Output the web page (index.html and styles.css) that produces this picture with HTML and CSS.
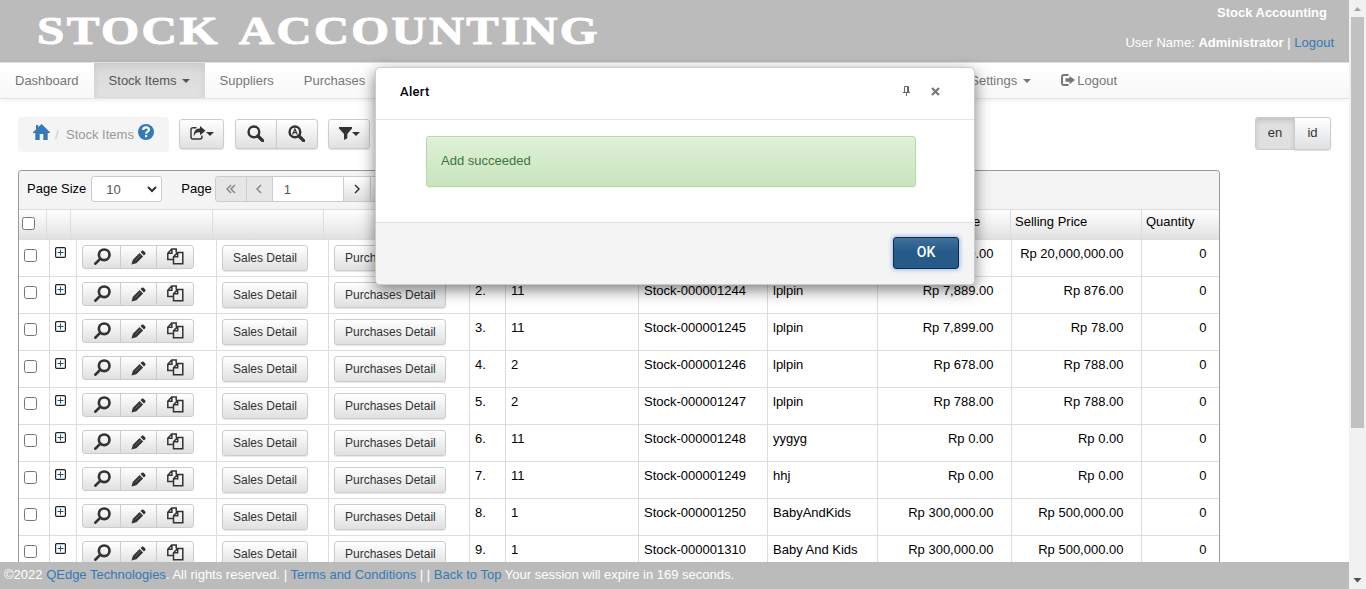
FILE: index.html
```html
<!DOCTYPE html>
<html lang="en">
<head>
<meta charset="utf-8">
<title>Stock Accounting</title>
<link rel="stylesheet" href="styles.css">
</head>
<body>
<svg class="defs" aria-hidden="true">
  <symbol id="zoom" viewBox="0 0 16 16"><circle cx="9.6" cy="6.4" r="5" fill="none" stroke="currentColor" stroke-width="2.5"/><path d="M6 10 1.300 14.700" stroke="currentColor" stroke-width="2.600" stroke-linecap="round"/></symbol>
  <symbol id="find" viewBox="0 0 16 16"><circle cx="6.500" cy="6.500" r="5" fill="none" stroke="currentColor" stroke-width="2.300"/><path d="M10.300 10.300 14.700 14.700" stroke="currentColor" stroke-width="3.200" stroke-linecap="round"/></symbol>
  <symbol id="pencil" viewBox="0 0 16 16"><path d="M.5 15.500 2 10.300 9.200 3.100 12.900 6.800 5.700 14ZM10.100 2.200 11.600.8Q12.500.1 13.400.8L15.200 2.600Q15.900 3.500 15.200 4.400L13.800 5.900Z" fill="currentColor"/><path d="m4.500 11.300 6-6" stroke="#888" stroke-width=".7"/></symbol>
  <symbol id="copy" viewBox="0 0 17 17"><path d="M5.700 11.500H.8V5.200L4.700 1H9.200V4.500M4.900 1.200V5.200H1M6.500 15.800V8.700L10.500 4.600H15.800V15.800ZM10.700 4.800V8.800H6.700" fill="none" stroke="currentColor" stroke-width="1.500"/></symbol>
  <symbol id="plus" viewBox="0 0 11 11"><rect x=".6" y=".6" width="9.800" height="9.800" rx="1.200" fill="none" stroke="#222" stroke-width="1.200"/><path d="M2.500 5.500h6M5.500 2.500v6" stroke="#157" stroke-width="1"/></symbol>
</svg>
<div class="screen">
  <div class="page">
    <header class="top">
      <svg class="logo" width="570" height="44" role="img"><text x="1" y="30" textLength="183" lengthAdjust="spacingAndGlyphs">STOCK</text><text x="203" y="30" textLength="361" lengthAdjust="spacingAndGlyphs">ACCOUNTING</text></svg>
      <div class="user"><div class="site">Stock Accounting</div><div>User Name: <b>Administrator</b> | <a>Logout</a></div></div>
    </header>
    <nav class="nav">
      <a class="item">Dashboard</a><a class="item active">Stock Items <i class="caret"></i></a><a class="item">Suppliers</a><a class="item">Purchases</a>
      <a class="item settings">Settings <i class="caret"></i></a>
      <a class="item out"><svg width="14" height="13" viewBox="0 0 14 13"><path d="M7.500 1H2.800Q1 1 1 2.800V9.200Q1 11 2.800 11H7.500" fill="none" stroke="currentColor" stroke-width="1.900"/><path d="M4.500 4.300H8.500V1.900L14 6 8.500 10.200V7.800H4.500Z" fill="currentColor"/></svg>Logout</a>
    </nav>
    <div class="tools">
      <div class="crumb"><svg width="17" height="16" viewBox="0 0 17 16"><path d="M8.500 0 17 8.300V9H14.700V16H10.300V10H6.700V16H2.300V9H0V8.300L3 5.400V1H5.200V3.200Z" fill="#337ab7"/></svg><span class="slash">/</span><span>Stock Items</span><svg width="16" height="16" viewBox="0 0 16 16"><circle cx="8" cy="8" r="8" fill="#337ab7"/><path d="M5.200 6C5.200 2.500 10.900 2.600 10.900 5.800 10.900 7.800 8.100 7.600 8.100 9.800" fill="none" stroke="#fff" stroke-width="2.200"/><path d="M7 11h2.200v2.200H7z" fill="#fff"/></svg></div>
      <button class="btn export"><svg width="16" height="15" viewBox="0 0 16 15"><path d="M6.500 1.800H3Q1 1.800 1 3.800V11Q1 13 3 13H10Q12 13 12 11V9.500" fill="none" stroke="currentColor" stroke-width="1.400"/><path d="M3.800 10.500C3.500 5 6 2.600 10 2.600V0L15.500 4.700 10 9.300V6.400C7 6.200 5 7 3.800 10.500Z" fill="currentColor"/></svg><i class="caret"></i></button>
      <div class="group"><button class="btn"><svg width="17" height="17"><use href="#find"/></svg></button><button class="btn"><svg width="17" height="17" viewBox="0 0 16 16"><use href="#find"/><path d="M4.300 9 6.500 3.700 8.700 9M5.200 7.200H7.900" fill="none" stroke="currentColor" stroke-width="1.100"/></svg></button></div>
      <button class="btn filter"><svg width="13" height="13" viewBox="0 0 13 13"><path d="M0 0H13V1.500L8.300 7V11.300L5 13V7L0 1.500Z" fill="currentColor"/></svg><i class="caret"></i></button>
      <div class="group lang"><button class="btn on">en</button><button class="btn">id</button></div>
    </div>
    <section class="grid">
      <div class="pager"><span>Page Size</span><div class="select">10<svg width="10" height="7" viewBox="0 0 10 7"><path d="m1 1 4 4 4-4" fill="none" stroke="#333" stroke-width="2"/></svg></div><span class="pagelabel">Page</span>
        <div class="pages"><span class="pg dis"><svg width="10" height="10" viewBox="0 0 10 10"><path d="M5 1 1 5l4 4M9 1 5 5l4 4"/></svg></span><span class="pg dis narrow"><svg width="6" height="10" viewBox="0 0 6 10"><path d="M5 1 1 5l4 4"/></svg></span><span class="num">1</span><span class="pg next"><svg width="6" height="10" viewBox="0 0 6 10"><path d="m1 1 4 4-4 4"/></svg></span><span class="pg"><svg width="10" height="10" viewBox="0 0 10 10"><path d="m1 1 4 4-4 4M5 1l4 4-4 4"/></svg></span></div>
      </div>
      <div class="head"><span><i class="check"></i></span><span></span><span></span><span></span><span></span><span></span><span></span><span></span><span></span><span class="price">Purchasing Price</span><span>Selling Price</span><span>Quantity</span></div>
      <div class="row"><span><i class="check"></i></span><span><svg class="plus"><use href="#plus"/></svg></span><span><div class="acts"><b><svg><use href="#zoom"/></svg></b><b><svg><use href="#pencil"/></svg></b><b><svg><use href="#copy"/></svg></b></div></span><span><button class="detail">Sales Detail</button></span><span><button class="detail">Purchases Detail</button></span><span>1.</span><span>11</span><span>Stock-000001243</span><span>lplpin</span><span>Rp 10,000,000.00</span><span>Rp 20,000,000.00</span><span>0</span></div>
      <div class="row"><span><i class="check"></i></span><span><svg class="plus"><use href="#plus"/></svg></span><span><div class="acts"><b><svg><use href="#zoom"/></svg></b><b><svg><use href="#pencil"/></svg></b><b><svg><use href="#copy"/></svg></b></div></span><span><button class="detail">Sales Detail</button></span><span><button class="detail">Purchases Detail</button></span><span>2.</span><span>11</span><span>Stock-000001244</span><span>lplpin</span><span>Rp 7,889.00</span><span>Rp 876.00</span><span>0</span></div>
      <div class="row"><span><i class="check"></i></span><span><svg class="plus"><use href="#plus"/></svg></span><span><div class="acts"><b><svg><use href="#zoom"/></svg></b><b><svg><use href="#pencil"/></svg></b><b><svg><use href="#copy"/></svg></b></div></span><span><button class="detail">Sales Detail</button></span><span><button class="detail">Purchases Detail</button></span><span>3.</span><span>11</span><span>Stock-000001245</span><span>lplpin</span><span>Rp 7,899.00</span><span>Rp 78.00</span><span>0</span></div>
      <div class="row"><span><i class="check"></i></span><span><svg class="plus"><use href="#plus"/></svg></span><span><div class="acts"><b><svg><use href="#zoom"/></svg></b><b><svg><use href="#pencil"/></svg></b><b><svg><use href="#copy"/></svg></b></div></span><span><button class="detail">Sales Detail</button></span><span><button class="detail">Purchases Detail</button></span><span>4.</span><span>2</span><span>Stock-000001246</span><span>lplpin</span><span>Rp 678.00</span><span>Rp 788.00</span><span>0</span></div>
      <div class="row"><span><i class="check"></i></span><span><svg class="plus"><use href="#plus"/></svg></span><span><div class="acts"><b><svg><use href="#zoom"/></svg></b><b><svg><use href="#pencil"/></svg></b><b><svg><use href="#copy"/></svg></b></div></span><span><button class="detail">Sales Detail</button></span><span><button class="detail">Purchases Detail</button></span><span>5.</span><span>2</span><span>Stock-000001247</span><span>lplpin</span><span>Rp 788.00</span><span>Rp 788.00</span><span>0</span></div>
      <div class="row"><span><i class="check"></i></span><span><svg class="plus"><use href="#plus"/></svg></span><span><div class="acts"><b><svg><use href="#zoom"/></svg></b><b><svg><use href="#pencil"/></svg></b><b><svg><use href="#copy"/></svg></b></div></span><span><button class="detail">Sales Detail</button></span><span><button class="detail">Purchases Detail</button></span><span>6.</span><span>11</span><span>Stock-000001248</span><span>yygyg</span><span>Rp 0.00</span><span>Rp 0.00</span><span>0</span></div>
      <div class="row"><span><i class="check"></i></span><span><svg class="plus"><use href="#plus"/></svg></span><span><div class="acts"><b><svg><use href="#zoom"/></svg></b><b><svg><use href="#pencil"/></svg></b><b><svg><use href="#copy"/></svg></b></div></span><span><button class="detail">Sales Detail</button></span><span><button class="detail">Purchases Detail</button></span><span>7.</span><span>11</span><span>Stock-000001249</span><span>hhj</span><span>Rp 0.00</span><span>Rp 0.00</span><span>0</span></div>
      <div class="row"><span><i class="check"></i></span><span><svg class="plus"><use href="#plus"/></svg></span><span><div class="acts"><b><svg><use href="#zoom"/></svg></b><b><svg><use href="#pencil"/></svg></b><b><svg><use href="#copy"/></svg></b></div></span><span><button class="detail">Sales Detail</button></span><span><button class="detail">Purchases Detail</button></span><span>8.</span><span>1</span><span>Stock-000001250</span><span>BabyAndKids</span><span>Rp 300,000.00</span><span>Rp 500,000.00</span><span>0</span></div>
      <div class="row"><span><i class="check"></i></span><span><svg class="plus"><use href="#plus"/></svg></span><span><div class="acts"><b><svg><use href="#zoom"/></svg></b><b><svg><use href="#pencil"/></svg></b><b><svg><use href="#copy"/></svg></b></div></span><span><button class="detail">Sales Detail</button></span><span><button class="detail">Purchases Detail</button></span><span>9.</span><span>1</span><span>Stock-000001310</span><span>Baby And Kids</span><span>Rp 300,000.00</span><span>Rp 500,000.00</span><span>0</span></div>
    </section>
    <footer class="foot">©2022 <a>QEdge Technologies</a>. All rights reserved. | <a>Terms and Conditions</a> | | <a>Back to Top</a> Your session will expire in 169 seconds.</footer>
  </div>
  <div class="scroll"><svg width="17" height="17" viewBox="0 0 17 17"><path d="m5 11 3.500-4 3.500 4Z" fill="#a3a3a3"/></svg><div class="thumb"></div><svg class="down" width="17" height="17" viewBox="0 0 17 17"><path d="m4.500 6 4 4.500 4-4.500Z" fill="#505050"/></svg></div>
  <div class="dialog">
    <div class="dhead"><span class="dtitle">Alert</span><svg class="pin" width="7" height="10" viewBox="0 0 7 10"><path d="M1.500.5h4V6M1.500.5V6M0 6.500h7M3.500 7v3M4.500 1v5" fill="none" stroke="#666"/></svg><svg width="9" height="9" viewBox="0 0 9 9"><path d="m1 1 7 7M8 1 1 8" stroke="#777" stroke-width="2.200"/></svg></div>
    <div class="dbody"><div class="alert">Add succeeded</div></div>
    <div class="dfoot"><button class="ok">OK</button></div>
  </div>
</div>
</body>
</html>
```
FILE: styles.css
```css
* { box-sizing: border-box; }
body { margin: 0; font: 13px/18px "Liberation Sans", Arial, sans-serif; color: #000; background: #fff; overflow: hidden; }
a { color: #337ab7; }
button { font: inherit; margin: 0; padding: 0; color: #333; }
.defs { display: block; width: 0; height: 0; }
.screen { display: flex; position: relative; width: 1366px; height: 589px; overflow: hidden; }
.page { display: flex; flex-direction: column; width: 1349px; height: 589px; }
.top { display: flex; flex: none; justify-content: space-between; height: 62px; background: #bbb; color: #fff; padding: 3px 15px 0 36px; }
.logo { margin-top: 11px; overflow: visible; }
.logo text { font: bold 41px "Liberation Serif", serif; letter-spacing: 2px; fill: #fff; stroke: #fff; stroke-width: 1; }
.user { text-align: right; }
.user div { height: 30px; }
.user .site { font-weight: bold; padding-right: 7px; padding-top: 1px; }
.user div + div { padding-top: 1px; }
.nav { display: flex; flex: none; height: 37px; border-top: 1px solid #e0e0e0; border-bottom: 1px solid #e3e3e3; background: linear-gradient(#fff, #f8f8f8); box-shadow: 0 1px 5px rgba(0,0,0,.075); }
.item { display: flex; align-items: center; gap: 6px; padding: 0 15px; color: #777; white-space: nowrap; height: 35px; }
.active { gap: 5px; background: linear-gradient(#d9d9d9, #e2e2e2); color: #555; box-shadow: inset 0 3px 9px rgba(0,0,0,.075); }
.settings { margin-left: auto; }
.out { gap: 2px; margin-right: 217px; }
.caret { width: 0; height: 0; border: 4px solid transparent; border-top-color: currentColor; border-bottom: 0; }
.tools { display: flex; flex: none; height: 71px; padding: 18px 18px 0; align-items: flex-start; }
.crumb { display: flex; align-items: center; height: 35px; width: 151px; padding: 0 0 0 15px; background: #f4f4f4; border-radius: 4px; color: #999; }
.crumb svg { margin-bottom: 5px; }
.crumb span + span { padding-right: 4px; }
.slash { color: #ccc; width: 16px; padding-left: 5px; margin-right: 0; }
.btn { display: flex; align-items: center; justify-content: center; height: 30px; border: 1px solid #ccc; border-radius: 3px; background: linear-gradient(#fff, #e0e0e0); box-shadow: 0 1px 1px rgba(0,0,0,.12); }
.btn > svg { margin-bottom: 1px; }
.tools > .btn, .tools > .group { margin-top: 2px; }
.export { width: 45px; margin-left: 10px; }
.group { display: flex; margin-left: 11px; }
.group .btn { width: 42px; padding-right: 1px; }
.group .btn:first-child { border-radius: 3px 0 0 3px; }
.group .btn + .btn { border-radius: 0 3px 3px 0; border-left-color: #ccc; margin-left: -1px; }
.filter { width: 42px; margin-left: 10px; }
.tools > .lang { margin: 0 0 0 auto; }
.lang .btn { height: 33px; width: 37px; padding: 0 0 2px; }
.lang .on { width: 40px; background: #e0e0e0; box-shadow: inset 0 3px 5px rgba(0,0,0,.125); }
.grid { flex: 1; min-height: 0; overflow: hidden; width: 1202px; margin-left: 18px; border: 1px solid #999; border-bottom: 0; border-radius: 4px 4px 0 0; }
.pager { display: flex; align-items: flex-start; height: 38px; padding: 5px 0 0 8px; background: #f4f4f4; line-height: 25px; }
.select { display: flex; align-items: center; justify-content: space-between; width: 71px; height: 26px; margin: 0 19px 0 5px; padding: 0 4px 0 14px; border: 1px solid #ccc; border-radius: 3px; background: #fff; color: #555; }
.pages { display: flex; margin-left: 3px; }
.pg, .num { display: flex; align-items: center; justify-content: center; height: 26px; width: 32px; border: 1px solid #ccc; margin-right: -1px; background: linear-gradient(#fff, #e0e0e0); }
.pg:first-child { border-radius: 3px 0 0 3px; }
.pg svg path { fill: none; stroke: #333; stroke-width: 1.5; }
.pg.dis { background: #e6e6e6; }
.pg.dis svg path { stroke: #888; }
.pg.narrow { width: 27px; }
.pg.next { width: 28px; }
.num { width: 72px; justify-content: flex-start; padding-left: 11px; background: #fff; color: #555; }
.head { display: grid; grid-template-columns: 28px 24px 142px 111px 146px 36px 133px 129px 110px 133px 131px 77px; height: 31px; border-top: 1px solid #ddd; border-bottom: 1px solid #ddd; background: linear-gradient(#fff, #e1e1e1); }
.head span { border-right: 1px solid #ddd; padding: 3px 4px 0; white-space: nowrap; }
.head .price { text-align: right; padding-right: 32px; }
.head span:last-child, .row > span:last-child { border-right: 0; }
.check { display: block; width: 13px; height: 13px; border: 1px solid #767676; border-radius: 2.5px; background: #fff; }
.head .check { margin: 4px 0 0 -1px; }
.row { display: grid; grid-template-columns: 31px 27px 140px 112px 141px 36px 133px 129px 110px 134px 130px 77px; height: 37px; border-bottom: 1px solid #ddd; }
.row > span { border-right: 1px solid #ddd; padding: 5px 5px 0; white-space: nowrap; }
.row .check { margin-top: 4px; }
.row > span:nth-child(n+10) { text-align: right; padding-right: 17.5px; }
.row > span:last-child { padding-right: 12.5px; }
.plus { display: block; width: 11px; height: 11px; margin-top: 2px; }
.acts { display: flex; width: 112px; height: 24px; border: 1px solid #ccc; border-radius: 3px; background: linear-gradient(#fff, #e0e0e0); }
.acts b { display: flex; align-items: center; justify-content: center; width: 37px; border-right: 1px solid #ccc; color: #333; }
.acts b:first-child { padding-left: 2px; width: 38px; flex: none; }
.acts b:last-child { border: 0; padding-left: 2px; }
.acts svg { width: 17px; height: 17px; margin-bottom: 1px; }
.acts b:nth-child(2) svg { width: 15px; height: 15px; margin-bottom: 0; }
.detail { height: 26px; padding: 0 9.600px 0 10px; border: 1px solid #ccc; border-radius: 3px; background: linear-gradient(#fff, #e0e0e0); font-size: 12px; line-height: 24px; box-shadow: 0 1px 1px rgba(0,0,0,.1); }
.foot { position: relative; flex: none; height: 27px; padding: 4px 4px; background: #bbb; color: #fff; }
.scroll { display: flex; flex-direction: column; align-items: center; width: 17px; background: #f1f1f1; }
.thumb { width: 13px; height: 411px; background: #c1c1c1; }
.down { margin-top: auto; }
.dialog { position: absolute; left: 375px; top: 67px; width: 600px; height: 218px; display: flex; flex-direction: column; border: 1px solid #ccc; border-radius: 5px; background: #fff; box-shadow: 0 5px 15px rgba(0,0,0,.5); overflow: hidden; }
.dhead { display: flex; align-items: center; flex: none; height: 52px; padding: 0 34px 5px 24px; border-bottom: 1px solid #e5e5e5; }
.dtitle { flex: 1; padding-top: 2px; font: 500 13px/18px Roboto, sans-serif; letter-spacing: .3px; }
.pin { margin-right: 21px; }
.dbody { flex: none; height: 102px; padding: 16px 58px 0 50px; }
.alert { height: 51px; border: 1px solid #b2dba1; border-radius: 3px; padding: 15px 14px; background: linear-gradient(#dff0d8, #c8e5bc); color: #3c763d; box-shadow: inset 0 1px 0 rgba(255,255,255,.25), 0 1px 2px rgba(0,0,0,.05); }
.dfoot { display: flex; justify-content: flex-end; flex: 1; padding: 14px 15px 0 0; border-top: 1px solid #e0e0e0; background: #f4f4f4; }
.ok { width: 66px; height: 32px; padding-bottom: 3px; border: 1px solid #122b40; border-radius: 3px; background: linear-gradient(#41719c, #265a88 45%); color: #fff; font: 500 14px Roboto, sans-serif; box-shadow: 0 0 4px 1px #9abcf0; }
```
